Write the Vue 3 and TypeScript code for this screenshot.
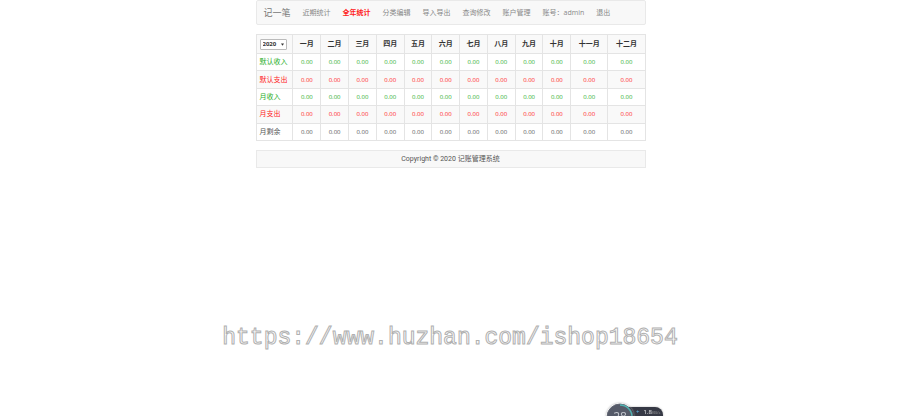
<script setup lang="ts">
import { ref } from 'vue'

interface Row {
  label: string
  tone: 'income' | 'expense' | 'rest'
  values: string[]
}

const year = ref('2020')
const links: string[] = ['近期统计', '全年统计', '分类编辑', '导入导出', '查询修改', '账户管理', '账号：admin', '退出']
const active = '全年统计'
const months: string[] = ['一月', '二月', '三月', '四月', '五月', '六月', '七月', '八月', '九月', '十月', '十一月', '十二月']
const zeros = (): string[] => months.map(() => (0).toFixed(2))
const rows: Row[] = [
  { label: '默认收入', tone: 'income', values: zeros() },
  { label: '默认支出', tone: 'expense', values: zeros() },
  { label: '月收入', tone: 'income', values: zeros() },
  { label: '月支出', tone: 'expense', values: zeros() },
  { label: '月剩余', tone: 'rest', values: zeros() },
]
</script>

<template>
  <div class="page">
    <nav class="navbar">
      <a class="brand" href="#">记一笔</a>
      <a v-for="link in links" :key="link" href="#" class="link" :class="{ active: link === active }">{{ link }}</a>
    </nav>

    <table class="stats">
      <thead>
        <tr>
          <th class="first">
            <span class="picker">
              <select v-model="year" class="year" aria-label="年份">
                <option>2020</option>
                <option>2019</option>
              </select>
              <svg class="arrow" viewBox="0 0 4 3" aria-hidden="true"><path d="M0 0h4L2 3z" /></svg>
            </span>
          </th>
          <th v-for="month in months" :key="month" scope="col" :class="{ wide: month.length > 2 }">{{ month }}</th>
        </tr>
      </thead>
      <tbody>
        <tr v-for="row in rows" :key="row.label" :class="row.tone">
          <th class="first" scope="row">{{ row.label }}</th>
          <td v-for="(value, i) in row.values" :key="i">{{ value }}</td>
        </tr>
      </tbody>
    </table>

    <footer class="footer">Copyright © 2020 记账管理系统</footer>
  </div>

  <p class="watermark">https://www.huzhan.com/ishop18654</p>

  <div class="monitor">
    <div class="speed"><span class="plus">+</span><span class="rate">1.8<small>KB/s</small></span></div>
    <div class="gauge">
      <svg class="ring" viewBox="0 0 28 28" aria-hidden="true">
        <circle cx="14" cy="14" r="13" fill="#555a68" stroke="#606572" />
        <path d="M14 2a12 12 0 0 1 12 12" fill="none" stroke="#4fb5b2" stroke-width="1.3" />
      </svg>
      <span class="score">28</span>
    </div>
  </div>
</template>

<style>
body {
  margin: 0;
  background: #fff;
}
</style>

<style scoped>
.page {
  box-sizing: border-box;
  max-width: 391px;
  margin: 0 auto;
  padding-left: 1px;
  font-family: "Open Sans", "Noto Sans CJK SC", sans-serif;
  font-size: 7px;
  line-height: 10px;
  color: #555;
}

.navbar {
  display: flex;
  align-items: center;
  box-sizing: border-box;
  height: 25px;
  padding: 0 7px;
  border: 1px solid #e9e9e9;
  border-radius: 2px;
  background: #f8f8f8;
  white-space: nowrap;
}

.brand {
  margin-right: 6px;
  font-size: 9px;
  color: #777;
  text-decoration: none;
}

.link {
  padding: 0 6px;
  color: #888;
  text-decoration: none;
}

.link.active {
  color: #f22;
  font-weight: 700;
}

.stats {
  width: 100%;
  height: 107px;
  margin-top: 9px;
  border-collapse: collapse;
  table-layout: fixed;
}

.stats th,
.stats td {
  height: 16px;
  padding: 0;
  border: 1px solid #e4e4e4;
  text-align: center;
}

.stats td {
  font-size: 6px;
}

.stats thead th {
  width: 7.14%;
  height: 18px;
  color: #333;
}

.stats thead .wide {
  width: 9.6%;
}

.stats thead .first {
  width: 8.8%;
}

.stats .first {
  padding-left: 3px;
  text-align: left;
}

.stats tbody .first {
  font-weight: 400;
}

.stats thead tr,
.stats tbody tr:nth-child(even) {
  background: #f9f9f9;
}

.income {
  color: #1fae1f;
}

.expense {
  color: #f22;
}

.picker {
  display: grid;
  align-items: center;
  width: 27px;
}

.year {
  grid-area: 1 / 1;
  width: 100%;
  height: 11px;
  padding: 0 0 0 2px;
  border: 1px solid #bbb;
  border-radius: 1px;
  background: #fff;
  appearance: none;
  font: 700 6px "Open Sans", sans-serif;
  color: #333;
}

.arrow {
  grid-area: 1 / 1;
  justify-self: end;
  width: 3px;
  height: 3px;
  margin-right: 3px;
  fill: #333;
  pointer-events: none;
}

.footer {
  margin-top: 9px;
  padding: 3px 0;
  border: 1px solid #e9e9e9;
  background: #f8f8f8;
  font-family: Roboto, "Noto Sans CJK SC", sans-serif;
  text-align: center;
}

.watermark {
  margin: 156px 0 0;
  font-family: "Liberation Mono", monospace;
  font-size: 23px;
  line-height: 28px;
  text-align: center;
  color: #fff;
  -webkit-text-stroke: 1px #b0b0b0;
}

.monitor {
  position: fixed;
  bottom: -15px;
  left: calc(50% + 156px);
  width: 57px;
  height: 28px;
  font-family: "Open Sans", sans-serif;
}

.speed {
  position: absolute;
  top: 4px;
  right: 0;
  display: flex;
  gap: 4px;
  box-sizing: border-box;
  width: 42px;
  height: 20px;
  padding-left: 15px;
  border-radius: 8px;
  background: #363945;
  box-shadow: 0 0 2px #aaa;
  font-size: 6px;
  line-height: 10px;
  color: #eee;
}

.speed small {
  font-size: 4px;
  color: #999;
}

.plus {
  color: #59b5e8;
}

.gauge {
  position: absolute;
  top: 0;
  left: 0;
  display: grid;
  place-items: center;
  width: 28px;
  height: 28px;
  border-radius: 50%;
  box-shadow: 0 0 2px #aaa;
}

.ring,
.score {
  grid-area: 1 / 1;
}

.ring {
  width: 28px;
  height: 28px;
}

.score {
  font-size: 12px;
  line-height: 12px;
  color: #c4c7ce;
}
</style>
